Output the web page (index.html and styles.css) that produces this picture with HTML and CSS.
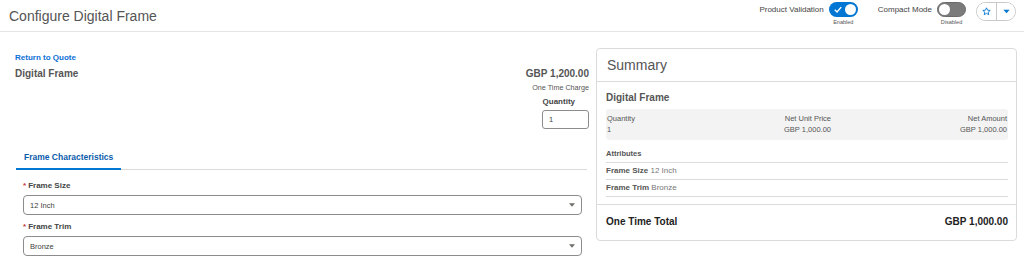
FILE: index.html
```html
<!DOCTYPE html>
<html lang="en">
<head>
    <meta charset="UTF-8">
    <meta name="viewport" content="width=device-width, initial-scale=1.0">
    <title>Configure Digital Frame</title>
    <link rel="stylesheet" href="styles.css">
</head>
<body>
    <header class="page-header">
        <h1 class="page-title">Configure Digital Frame</h1>
        <div class="header-controls">
            <div class="switch-group">
                <span class="switch-label">Product Validation</span>
                <div class="switch-box">
                    <span class="switch on">
                        <svg class="switch-check" viewBox="0 0 10 8" width="8" height="7"><path d="M1 4.2 L3.8 7 L9 1" fill="none" stroke="#fff" stroke-width="1.8"/></svg>
                        <span class="knob"></span>
                    </span>
                    <span class="switch-caption">Enabled</span>
                </div>
            </div>
            <div class="switch-group">
                <span class="switch-label">Compact Mode</span>
                <div class="switch-box">
                    <span class="switch off"><span class="knob"></span></span>
                    <span class="switch-caption">Disabled</span>
                </div>
            </div>
            <div class="btn-group">
                <button class="btn-icon">
                    <svg viewBox="0 0 20 20" width="9" height="9"><path d="M10 1.8 L12.4 7.1 L18.2 7.6 L13.8 11.4 L15.1 17.1 L10 14.1 L4.9 17.1 L6.2 11.4 L1.8 7.6 L7.6 7.1 Z" fill="none" stroke="#0176d3" stroke-width="2" stroke-linejoin="round"/></svg>
                </button>
                <button class="btn-icon">
                    <svg viewBox="0 0 10 6" width="7" height="5"><path d="M0.5 0.5 L9.5 0.5 L5 5.5 Z" fill="#0176d3"/></svg>
                </button>
            </div>
        </div>
    </header>

    <main class="layout">
        <section class="config">
            <a class="back-link" href="#">Return to Quote</a>
            <div class="product-row">
                <div class="product-name">Digital Frame</div>
                <div class="product-price">
                    <div class="price">GBP 1,200.00</div>
                    <div class="price-type">One Time Charge</div>
                    <div class="qty-label">Quantity</div>
                    <input class="qty-input" type="text" value="1">
                </div>
            </div>

            <div class="tabs">
                <span class="tab active">Frame Characteristics</span>
            </div>

            <div class="fields">
                <label class="field-label"><abbr>*</abbr>Frame Size</label>
                <div class="select">
                    <span>12 Inch</span>
                    <svg viewBox="0 0 10 6" width="6" height="4"><path d="M0 0 L10 0 L5 6 Z" fill="#706e6b"/></svg>
                </div>
                <label class="field-label"><abbr>*</abbr>Frame Trim</label>
                <div class="select">
                    <span>Bronze</span>
                    <svg viewBox="0 0 10 6" width="6" height="4"><path d="M0 0 L10 0 L5 6 Z" fill="#706e6b"/></svg>
                </div>
            </div>
        </section>

        <aside class="summary">
            <div class="summary-header">Summary</div>
            <div class="summary-body">
                <div class="summary-product">Digital Frame</div>
                <div class="price-box">
                    <span>Quantity</span>
                    <span class="num">Net Unit Price</span>
                    <span class="num">Net Amount</span>
                    <span>1</span>
                    <span class="num">GBP 1,000.00</span>
                    <span class="num">GBP 1,000.00</span>
                </div>
                <div class="attr-row attr-title">Attributes</div>
                <div class="attr-row"><b>Frame Size</b> 12 Inch</div>
                <div class="attr-row"><b>Frame Trim</b> Bronze</div>
            </div>
            <div class="summary-total">
                <span>One Time Total</span>
                <span>GBP 1,000.00</span>
            </div>
        </aside>
    </main>
</body>
</html>
```

FILE: styles.css
```css
* {
    box-sizing: border-box;
}

body {
    margin: 0;
    font-family: 'Liberation Sans', Arial, sans-serif;
    color: #3e3e3c;
    background: #fff;
}

.page-header {
    height: 32px;
    border-bottom: 1px solid #e5e5e5;
    display: flex;
    justify-content: space-between;
    align-items: flex-start;
    padding: 0 8px 0 9px;
}

.page-title {
    margin: 0;
    font-size: 14px;
    font-weight: 400;
    line-height: 32px;
    color: #555;
}

.header-controls {
    display: flex;
    align-items: flex-start;
    padding-top: 2px;
}

.switch-group {
    display: flex;
    align-items: flex-start;
    margin-right: 10px;
}

.switch-group + .switch-group {
    margin-left: 10px;
}

.switch-label {
    font-size: 8px;
    line-height: 15px;
    color: #444;
    margin-right: 5px;
}

.switch-box {
    display: flex;
    flex-direction: column;
    align-items: center;
}

.switch {
    position: relative;
    width: 29px;
    height: 15px;
    border-radius: 8px;
    display: block;
}

.switch.on {
    background: #0176d3;
}

.switch.off {
    background: #7b7b7b;
    border: 1px solid #6b6b6b;
}

.knob {
    position: absolute;
    top: 2px;
    width: 11px;
    height: 11px;
    border-radius: 50%;
    background: #fff;
}

.switch.on .knob {
    right: 2px;
}

.switch.off .knob {
    top: 1px;
    left: 1px;
}

.switch-check {
    position: absolute;
    left: 5px;
    top: 4px;
}

.switch-caption {
    font-size: 5.5px;
    line-height: 10px;
    color: #555;
}

.btn-group {
    display: flex;
    height: 19px;
    border: 1px solid #c9c9c9;
    border-radius: 10px;
    overflow: hidden;
}

.btn-icon {
    width: 19px;
    height: 17px;
    padding: 0;
    border: 0;
    background: #fff;
    display: flex;
    align-items: center;
    justify-content: center;
}

.btn-icon + .btn-icon {
    border-left: 1px solid #c9c9c9;
}

.layout {
    display: grid;
    grid-template-columns: 1fr 421px;
    gap: 7px;
    padding: 16px 7px 0 15px;
}

.back-link {
    display: block;
    margin-top: 5px;
    font-size: 8px;
    line-height: 10px;
    font-weight: 700;
    color: #0b6fd6;
    text-decoration: none;
}

.product-row {
    display: flex;
    justify-content: space-between;
    margin-top: 5px;
}

.product-name {
    font-size: 10px;
    line-height: 12px;
    font-weight: 700;
    color: #555;
}

.product-price {
    display: flex;
    flex-direction: column;
    align-items: flex-end;
}

.price {
    font-size: 10px;
    line-height: 12px;
    font-weight: 700;
    color: #555;
}

.price-type {
    margin-top: 3px;
    font-size: 7.2px;
    line-height: 10px;
    color: #555;
}

.qty-label {
    margin-top: 4px;
    margin-right: 14px;
    font-size: 8px;
    line-height: 10px;
    font-weight: 700;
    color: #444;
}

.qty-input {
    margin-top: 3px;
    width: 47px;
    height: 19px;
    border: 1px solid #8c8c8c;
    border-radius: 3px;
    padding: 0 6px;
    font-family: inherit;
    font-size: 7.5px;
    color: #3e3e3c;
}

.tabs {
    display: flex;
    margin: 16px 2px 0 1px;
    border-bottom: 1px solid #dddbda;
}

.tab {
    padding: 7px 8px 6px;
    font-size: 8.5px;
    line-height: 10px;
    font-weight: 700;
    color: #0b5cab;
    margin-bottom: -1px;
}

.tab.active {
    border-bottom: 2px solid #0176d3;
}

.fields {
    padding: 11px 7px 0 8px;
    display: flex;
    flex-direction: column;
}

.field-label {
    font-size: 8px;
    line-height: 10px;
    font-weight: 700;
    color: #444;
    margin-bottom: 4px;
}

.field-label abbr {
    color: #c23934;
    margin-right: 2px;
    text-decoration: none;
}

.select {
    height: 20px;
    border: 1px solid #8c8c8c;
    border-radius: 4px;
    display: flex;
    align-items: center;
    justify-content: space-between;
    padding: 0 6px 0 6px;
    font-size: 7.5px;
    color: #3e3e3c;
    margin-bottom: 7px;
}

.summary {
    border: 1px solid #dddbda;
    border-radius: 4px;
    align-self: start;
}

.summary-header {
    height: 33px;
    padding: 0 10px;
    font-size: 14px;
    line-height: 32px;
    color: #555;
    border-bottom: 1px solid #dddbda;
}

.summary-body {
    padding: 10px 8px 7px 9px;
}

.summary-product {
    font-size: 10px;
    line-height: 12px;
    font-weight: 700;
    color: #555;
}

.price-box {
    margin-top: 5px;
    background: #f3f3f3;
    border-radius: 3px;
    padding: 4px 1px 5px;
    display: grid;
    grid-template-columns: 1fr 100px 176px;
    font-size: 7.5px;
    line-height: 11px;
    color: #555;
}

.price-box .num {
    text-align: right;
}

.attr-row {
    padding: 3px 0;
    font-size: 8px;
    line-height: 10px;
    color: #777;
    border-bottom: 1px solid #dddbda;
}

.attr-row b {
    color: #555;
}

.attr-title {
    margin-top: 6px;
    font-size: 7.5px;
    font-weight: 700;
    color: #555;
}

.summary-total {
    border-top: 1px solid #dddbda;
    padding: 11px 8px 12px 9px;
    display: flex;
    justify-content: space-between;
    font-size: 10px;
    line-height: 12px;
    font-weight: 700;
    color: #222;
}
```
